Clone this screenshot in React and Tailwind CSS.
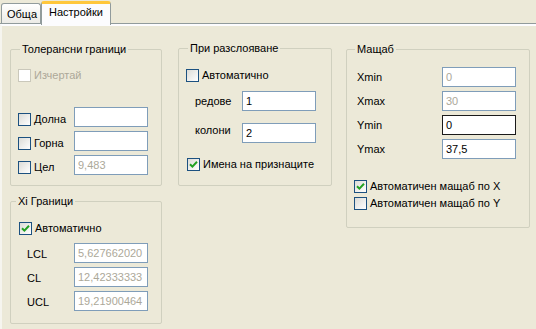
import React from 'react';

const Check = ({ checked, disabled }) => (
    <span
        className={`w-[13px] h-[13px] shrink-0 border flex items-center justify-center ${
            disabled ? 'border-[#CAC8BB] bg-white' : 'border-[#1C5180] bg-linear-to-br from-[#DCDCD7] to-white'
        }`}
    >
        {checked && (
            <svg width="9" height="9" viewBox="0 0 9 9">
                <path d="M1 4.2 L3.4 6.6 L8 1.8" stroke="#21A121" strokeWidth="2" fill="none" />
            </svg>
        )}
    </span>
);

const CheckLabel = ({ label, checked, disabled, className = '' }) => (
    <div className={`flex items-center gap-[3px] h-[13px] ${className}`}>
        <Check checked={checked} disabled={disabled} />
        <span className={`leading-[13px] whitespace-nowrap ${disabled ? 'text-[#ACA899]' : ''}`}>{label}</span>
    </div>
);

const Field = ({ value = '', disabled, dark, className = '' }) => (
    <div
        className={`w-[74px] h-[20px] shrink-0 bg-white border px-[3px] flex items-center leading-[13px] ${
            dark ? 'border-[#1A1A1A]' : 'border-[#7F9DB9]'
        } ${disabled ? 'text-[#ACA899]' : 'text-black'} ${className}`}
    >
        {value}
    </div>
);

const Group = ({ title, titleLeft, className = '', children }) => (
    <div className={`relative border border-[#D0D0BF] rounded-[2px] ${className}`}>
        <span className={`absolute -top-[7px] ${titleLeft} px-[2px] bg-[#ECE9D8] leading-[13px] whitespace-nowrap`}>
            {title}
        </span>
        {children}
    </div>
);

export default function App() {
    return (
        <div className="w-[536px] h-[329px] bg-[#ECE9D8] font-['Liberation_Sans',Arial,sans-serif] text-[11px] text-black overflow-hidden flex flex-col">
            {/* Tabs */}
            <div className="h-[24px] shrink-0 flex items-end border-b border-[#919B9C]">
                <div className="ml-[1px] w-[40px] h-[20px] border border-b-0 border-[#919B9C] rounded-t-[3px] bg-linear-to-b from-white to-[#ECEBE6] pl-[5px] pt-[4px] leading-[13px]">
                    Обща
                </div>
                <div className="relative z-10 -mb-[2px] w-[70px] h-[24px] border-x border-[#919B9C] border-t-[3px] border-t-[#FFC73C] rounded-t-[3px] bg-[#FCFCFE] pl-[7px] pt-[2px] leading-[13px]">
                    Настройки
                </div>
            </div>

            {/* Body */}
            <div className="flex-1 flex items-start border-t-2 border-t-[#FCFCFE] border-l-2 border-l-[#F6F5EF] pl-[8px] pt-[23px]">
                {/* Column 1 */}
                <div className="w-[152px] flex flex-col gap-[15px]">
                    <Group title="Толерансни граници" titleLeft="left-[9px]" className="h-[137px] pl-[7px] pt-[19px]">
                        <CheckLabel label="Изчертай" disabled />
                        <div className="mt-[25px] flex flex-col gap-[4px]">
                            {[
                                ['Долна', ''],
                                ['Горна', ''],
                                ['Цел', '9,483'],
                            ].map(([label, value]) => (
                                <div key={label} className="flex items-start h-[20px]">
                                    <div className="w-[56px] pt-[6px]">
                                        <CheckLabel label={label} />
                                    </div>
                                    <Field value={value} disabled={!!value} />
                                </div>
                            ))}
                        </div>
                    </Group>

                    <Group title="Xi Граници" titleLeft="left-[5px]" className="h-[123px] pl-[8px] pt-[20px]">
                        <CheckLabel label="Автоматично" checked />
                        <div className="mt-[8px] flex flex-col gap-[4px]">
                            {[
                                ['LCL', '5,627662020'],
                                ['CL', '12,42333333'],
                                ['UCL', '19,21900464'],
                            ].map(([label, value]) => (
                                <div key={label} className="flex items-start h-[20px]">
                                    <span className="w-[47px] ml-[8px] pt-[5px] leading-[13px]">{label}</span>
                                    <Field value={value} disabled />
                                </div>
                            ))}
                        </div>
                    </Group>
                </div>

                {/* Column 2 */}
                <Group title="При разслояване" titleLeft="left-[9px]" className="ml-[16px] -mt-px w-[154px] h-[138px] pl-[7px] pt-[20px]">
                    <CheckLabel label="Автоматично" />
                    <div className="mt-[9px] flex items-start h-[20px]">
                        <span className="w-[47px] ml-[9px] pt-[4px] leading-[13px]">редове</span>
                        <Field value="1" className="w-[73px]" />
                    </div>
                    <div className="mt-[12px] flex items-start h-[20px]">
                        <span className="w-[47px] ml-[9px] pt-[1px] leading-[13px]">колони</span>
                        <Field value="2" className="w-[73px]" />
                    </div>
                    <CheckLabel label="Имена на признаците" checked className="mt-[15px] ml-[1px]" />
                </Group>

                {/* Column 3 */}
                <Group title="Мащаб" titleLeft="left-[8px]" className="ml-[14px] w-[184px] h-[179px] pl-[10px] pt-[17px]">
                    <div className="flex flex-col gap-[4px]">
                        {[
                            ['Xmin', '0', true, false],
                            ['Xmax', '30', true, false],
                            ['Ymin', '0', false, true],
                            ['Ymax', '37,5', false, false],
                        ].map(([label, value, disabled, dark]) => (
                            <div key={label} className="flex items-start h-[20px]">
                                <span className="w-[85px] pt-[4px] leading-[13px]">{label}</span>
                                <Field value={value} disabled={disabled} dark={dark} className="w-[73px]" />
                            </div>
                        ))}
                    </div>
                    <CheckLabel label="Автоматичен мащаб по X" checked className="mt-[21px] -ml-[3px]" />
                    <CheckLabel label="Автоматичен мащаб по Y" className="mt-[4px] -ml-[3px]" />
                </Group>
            </div>
        </div>
    );
}
